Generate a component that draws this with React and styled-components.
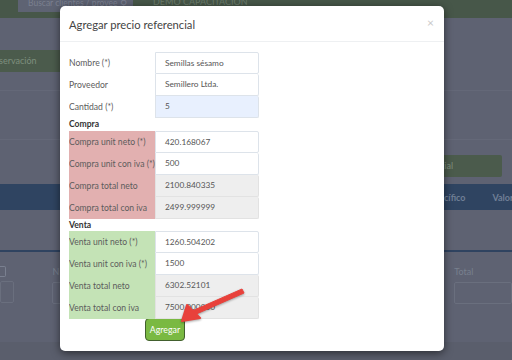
import React from "react";
import styled, { createGlobalStyle } from "styled-components";

const GlobalStyle = createGlobalStyle`
  body {
    margin: 0;
    background: #5e6272;
    font-family: "Lato", "Liberation Sans", Arial, sans-serif;
  }
`;

const Page = styled.div`
  position: relative;
  width: 512px;
  height: 360px;
  overflow: hidden;
  background: #5e6272;
  display: flex;
  flex-direction: column;
`;

const TopBar = styled.div`
  height: 18px;
  background: #475749;
  display: flex;
  align-items: flex-start;
  padding-left: 18px;
  gap: 20px;
  flex-shrink: 0;
`;

const SearchBox = styled.div`
  width: 115px;
  height: 12px;
  background: #5e6373;
  color: #7b8090;
  font-size: 8.5px;
  line-height: 6px;
  padding-left: 10px;
  box-sizing: border-box;
  display: flex;
  justify-content: space-between;
  overflow: hidden;
  span {
    padding-right: 6px;
    font-size: 10px;
  }
`;

const Brand = styled.div`
  color: #6b7c6c;
  font-size: 9px;
  line-height: 4px;
`;

const Band = styled.div`
  height: ${(p) => p.h}px;
  flex-shrink: 0;
  background: ${(p) => p.bg || "transparent"};
  border-bottom: ${(p) => (p.line ? `1px solid ${p.line}` : "none")};
  box-sizing: border-box;
  display: flex;
  align-items: center;
  color: #78808e;
  font-size: 9px;
`;

const GreenTab = styled.div`
  width: 62px;
  height: 22px;
  background: #4b5b4c;
  color: #7e8f7e;
  font-size: 9px;
  line-height: 22px;
  text-indent: -1px;
  overflow: hidden;
  white-space: nowrap;
`;

const GreenButton = styled.div`
  margin-left: auto;
  margin-right: 10px;
  width: 62px;
  height: 22px;
  border-radius: 2px;
  background: #4b5b4c;
  color: #7e8f7e;
  font-size: 9px;
  line-height: 22px;
`;

const HeadCell = styled.span`
  color: #6f7f96;
  font-size: 9px;
  font-weight: 700;
  margin-left: ${(p) => p.ml || 0}px;
`;

const FilterRow = styled.div`
  flex-shrink: 0;
  height: 92px;
  border-top: 2px solid #2f4360;
  display: flex;
  padding-top: 14px;
  box-sizing: border-box;
`;

const FilterCol = styled.div`
  margin-left: ${(p) => p.ml}px;
  width: ${(p) => p.w}px;
  display: flex;
  flex-direction: column;
  gap: 4px;
  color: #78808e;
  font-size: 9px;
  line-height: 12px;
`;

const FakeCheck = styled.div`
  width: 6px;
  height: 11px;
  box-sizing: border-box;
  border: 1px solid #7a8090;
  border-left: none;
  border-radius: 0 2px 2px 0;
`;

const FakeInput = styled.div`
  height: 20px;
  border: 1px solid #6a6f7e;
  border-radius: 2px;
`;

const Footer = styled.div`
  flex: 1;
  background: #5a5e6c;
`;

const Modal = styled.div`
  position: absolute;
  top: 6px;
  left: 60px;
  width: 384px;
  height: 345px;
  background: #fff;
  border-radius: 5px;
  box-shadow: 0 2px 8px rgba(0, 0, 0, 0.55);
  color: #555;
`;

const ModalHeader = styled.div`
  height: 36px;
  border-bottom: 1px solid #eef0f2;
  display: flex;
  align-items: center;
  justify-content: space-between;
  padding: 2px 10px 0 9px;
  box-sizing: border-box;
`;

const Title = styled.h4`
  margin: 0;
  font-size: 11.2px;
  font-weight: 400;
  color: #444;
`;

const Close = styled.span`
  color: #c9c9c9;
  font-size: 12px;
  line-height: 1;
  margin-top: -4px;
`;

const Body = styled.div`
  padding: 10px 9px 0;
`;

const Row = styled.div`
  display: grid;
  grid-template-columns: 86px 104px;
  height: 22px;
`;

const Label = styled.div`
  background: ${(p) => p.bg || "transparent"};
  font-size: 8.6px;
  line-height: 22px;
  color: #5c5c5c;
  white-space: nowrap;
  overflow: hidden;
`;

const Input = styled.div`
  background: ${(p) => (p.readonly ? "#eeeeee" : p.focus ? "#e8f0fe" : "#fff")};
  border: 1px solid ${(p) => (p.readonly ? "#e2e2e2" : "#dde3ea")};
  border-top-width: ${(p) => (p.first ? 1 : 0)}px;
  border-radius: 0 2px 2px 0;
  font-size: 8.3px;
  line-height: ${(p) => (p.first ? 20 : 21)}px;
  padding-left: 9px;
  color: #555;
  box-sizing: border-box;
  white-space: nowrap;
  overflow: hidden;
`;

const Section = styled.div`
  font-size: 8.6px;
  font-weight: 700;
  color: #333;
  height: ${(p) => p.h}px;
  line-height: ${(p) => p.h}px;
`;

const Submit = styled.button`
  display: block;
  margin: -1px 0 0 76px;
  width: 40px;
  height: 23px;
  padding: 0;
  border: 1px solid #42602e;
  border-radius: 4px;
  background: #7ab942;
  color: #fff;
  font-family: inherit;
  font-size: 8.8px;
`;

const Arrow = styled.svg`
  position: absolute;
  left: 118px;
  top: 276px;
  overflow: visible;
`;

const compra = [
  { label: "Compra unit neto (*)", value: "420.168067" },
  { label: "Compra unit con iva (*)", value: "500" },
  { label: "Compra total neto", value: "2100.840335", readonly: true },
  { label: "Compra total con iva", value: "2499.999999", readonly: true },
];

const venta = [
  { label: "Venta unit neto (*)", value: "1260.504202" },
  { label: "Venta unit con iva (*)", value: "1500" },
  { label: "Venta total neto", value: "6302.52101", readonly: true },
  { label: "Venta total con iva", value: "7500.000000", readonly: true },
];

const Group = ({ rows, bg }) =>
  rows.map((r, i) => (
    <Row key={r.label}>
      <Label bg={bg}>{r.label}</Label>
      <Input readonly={r.readonly} first={i === 0}>
        {r.value}
      </Input>
    </Row>
  ));

export default function App() {
  return (
    <>
      <GlobalStyle />
      <Page>
        <TopBar>
          <SearchBox>
            Buscar clientes / provee<span>⚲</span>
          </SearchBox>
          <Brand>DEMO CAPACITACION</Brand>
        </TopBar>
        <Band h={32} />
        <Band h={22}>
          <GreenTab>servación</GreenTab>
        </Band>
        <Band h={19} line="#646878" />
        <Band h={49} line="#646878" />
        <Band h={15} />
        <Band h={22}>
          <GreenButton>cial</GreenButton>
        </Band>
        <Band h={7} />
        <Band h={26} bg="#2f4461">
          <HeadCell ml={444}>cífico</HeadCell>
          <HeadCell ml={27}>Valor</HeadCell>
        </Band>
        <Band h={40} />
        <FilterRow>
          <FilterCol ml={0} w={15}>
            <FakeCheck />
            <FakeInput />
          </FilterCol>
          <FilterCol ml={38} w={60}>
            <span>N</span>
            <FakeInput />
          </FilterCol>
          <FilterCol ml={344} w={60}>
            <span>Total</span>
            <FakeInput />
          </FilterCol>
        </FilterRow>
        <Footer />

        <Modal>
          <ModalHeader>
            <Title>Agregar precio referencial</Title>
            <Close>×</Close>
          </ModalHeader>
          <Body>
            <Row>
              <Label>Nombre (*)</Label>
              <Input first>Semillas sésamo</Input>
            </Row>
            <Row>
              <Label>Proveedor</Label>
              <Input>Semillero Ltda.</Input>
            </Row>
            <Row>
              <Label>Cantidad (*)</Label>
              <Input focus>5</Input>
            </Row>
            <Section h={13}>Compra</Section>
            <Group rows={compra} bg="#e2b0b0" />
            <Section h={12}>Venta</Section>
            <Group rows={venta} bg="#c4e3b6" />
            <Submit>Agregar</Submit>
          </Body>
          <Arrow width="70" height="46" viewBox="0 0 70 46">
            <g style={{ filter: "drop-shadow(0 1px 1px rgba(0,0,0,0.35))" }}>
              <polygon points="64,7 66,11 16,33 14,29" fill="#e8413b" strokeLinejoin="round" stroke="#e8413b" strokeWidth="1" />
              <polygon points="4,39 9,23 22,36" fill="#e8413b" stroke="#e8413b" strokeWidth="2" strokeLinejoin="round" />
            </g>
          </Arrow>
        </Modal>
      </Page>
    </>
  );
}
